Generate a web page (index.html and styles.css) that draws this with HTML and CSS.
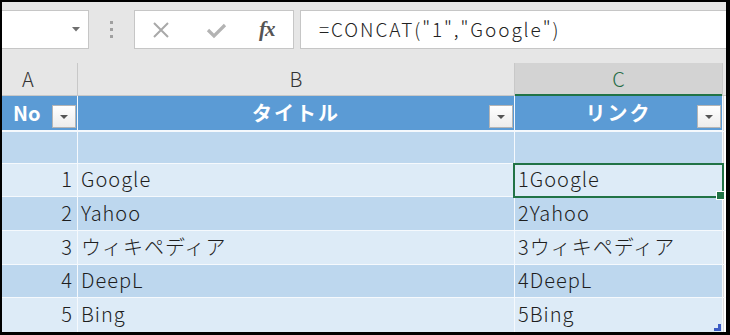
FILE: index.html
```html
<!DOCTYPE html>
<html lang="ja">
<head>
<meta charset="utf-8">
<title>Excel CONCAT</title>
<link rel="stylesheet" href="styles.css">
</head>
<body>
<div class="frame">
  <div class="toolbar">
    <div class="namebox">
      <svg class="nb-arrow" width="8" height="5" viewBox="0 0 8 5"><path d="M0 0H8L4 4.5Z" fill="#6f6f6f"/></svg>
    </div>
    <div class="dots"><i></i><i></i><i></i></div>
    <div class="fbuttons">
      <svg class="ico" width="20" height="20" viewBox="0 0 20 20"><path d="M3 3L17 17M17 3L3 17" stroke="#a9a9a9" stroke-width="2" fill="none"/></svg>
      <svg class="ico" width="22" height="20" viewBox="0 0 22 20"><path d="M3 10L9 16L20 5" stroke="#b3b3b3" stroke-width="3.2" fill="none"/></svg>
      <span class="fx">fx</span>
    </div>
    <div class="formula">=CONCAT("1","Google")</div>
  </div>

  <div class="colheads">
    <div class="ch ch-a">A</div>
    <div class="ch ch-b">B</div>
    <div class="ch ch-c">C</div>
    <div class="ch ch-d"></div>
  </div>

  <div class="sheet">
    <div class="th th-no">No<span class="filter"></span></div>
    <div class="th th-c">タイトル<span class="filter"></span></div>
    <div class="th th-c">リンク<span class="filter"></span></div>
    <div class="d"></div>

    <div class="c dark"></div><div class="c dark"></div><div class="c dark"></div><div class="d"></div>

    <div class="c light num">1</div><div class="c light">Google</div><div class="c light sel">1Google</div><div class="d"></div>
    <div class="c dark num">2</div><div class="c dark">Yahoo</div><div class="c dark">2Yahoo</div><div class="d"></div>
    <div class="c light num">3</div><div class="c light">ウィキペディア</div><div class="c light">3ウィキペディア</div><div class="d"></div>
    <div class="c dark num">4</div><div class="c dark">DeepL</div><div class="c dark">4DeepL</div><div class="d"></div>
    <div class="c light num">5</div><div class="c light">Bing</div><div class="c light last">5Bing<svg class="resize" width="7" height="7" viewBox="0 0 7 7"><path d="M4 0H7V7H0V4H4Z" fill="#3d5cc4"/></svg></div><div class="d"></div>
  </div>
</div>
</body>
</html>
```

FILE: styles.css
```css
* { box-sizing: border-box; }
html, body { margin: 0; padding: 0; }
body {
  width: 730px;
  height: 335px;
  overflow: hidden;
  font-family: "Noto Sans CJK JP", "Noto Sans", sans-serif;
  color: #222;
}
.frame {
  width: 730px;
  height: 335px;
  border-style: solid;
  border-color: #000;
  border-width: 2px 4px 3px 2px;
  background: #e6e6e6;
  overflow: hidden;
}

/* toolbar */
.toolbar {
  height: 61px;
  display: flex;
  align-items: flex-start;
  padding-top: 8px;
}
.namebox {
  width: 87px;
  height: 39px;
  background: #fff;
  border: 1px solid #c6c6c6;
  border-left: none;
  display: flex;
  align-items: center;
  justify-content: flex-end;
  padding-right: 8px;
}
.dots {
  width: 45px;
  height: 39px;
  display: flex;
  flex-direction: column;
  align-items: center;
  justify-content: center;
  gap: 4px;
}
.dots i {
  display: block;
  width: 3px;
  height: 3px;
  background: #a0a0a0;
}
.fbuttons {
  width: 160px;
  height: 39px;
  background: #fff;
  border: 1px solid #c6c6c6;
  display: flex;
  align-items: center;
  padding-left: 16px;
  gap: 34px;
}
.fx {
  font-family: "Liberation Serif", serif;
  font-style: italic;
  font-weight: bold;
  font-size: 21px;
  color: #555;
  letter-spacing: -1px;
  margin-left: -2px;
}
.formula {
  flex: 1;
  height: 39px;
  margin-left: 6px;
  background: #fff;
  border: 1px solid #c6c6c6;
  border-right: none;
  font-size: 19px;
  font-weight: 300;
  letter-spacing: 1.9px;
  line-height: 36px;
  padding-left: 18px;
  color: #222;
  white-space: nowrap;
}

/* column headers */
.colheads {
  display: grid;
  grid-template-columns: 75px 436px 207px 1fr;
  column-gap: 1px;
  height: 33px;
  background: #c8c8c8;
}
.ch {
  background: #e6e6e6;
  font-size: 20px;
  font-weight: 300;
  line-height: 32px;
  height: 32px;
  color: #333;
  text-align: center;
}
.ch-a { text-align: left; padding-left: 20px; }
.ch-c {
  background: #d3d3d3;
  color: #1f6b46;
  height: 33px;
  border-bottom: 2px solid #217346;
}

/* sheet */
.sheet {
  display: grid;
  grid-template-columns: 75px 436px 207px 1fr;
  grid-template-rows: 35px 31px 32px 33px 33px 32px 34px;
  gap: 1px;
  background: #f5f9fd;
}
.th {
  position: relative;
  background: #5b9bd5;
  color: #fff;
  font-weight: bold;
  font-size: 20px;
  margin-bottom: 1px;
  display: flex;
  align-items: center;
  padding-bottom: 1px;
}
.th-no { padding-left: 11px; }
.th-c { justify-content: center; letter-spacing: 2px; }
.filter {
  position: absolute;
  right: 1px;
  bottom: 2px;
  width: 24px;
  height: 23px;
  background: linear-gradient(#ffffff, #ececec);
  border: 1px solid #b5b5b5;
}
.filter::after {
  content: "";
  position: absolute;
  left: 7px;
  top: 9px;
  border-left: 4px solid transparent;
  border-right: 4px solid transparent;
  border-top: 4px solid #555;
}
.d { background: #fff; border-left: 1px solid #d9d9d9; }
.sheet > .d:first-of-type { margin-bottom: 1px; }
.c {
  position: relative;
  font-size: 20px;
  font-weight: 300;
  display: flex;
  align-items: center;
  padding-left: 3px;
  padding-bottom: 3px;
  white-space: nowrap;
  letter-spacing: 1px;
  color: #1e1e1e;
}
.dark { background: #bdd7ee; }
.light { background: #ddebf7; }
.num { justify-content: flex-end; padding-right: 4px; padding-left: 0; }
.sel::after {
  content: "";
  position: absolute;
  top: -1px;
  left: -2px;
  right: -2px;
  bottom: -2px;
  border: 2px solid #217346;
  z-index: 2;
}
.sel::before {
  content: "";
  position: absolute;
  right: -3px;
  bottom: -4px;
  width: 7px;
  height: 7px;
  background: #217346;
  border: 1px solid #fff;
  z-index: 3;
}
.resize {
  position: absolute;
  right: 1px;
  bottom: 1px;
}
```
